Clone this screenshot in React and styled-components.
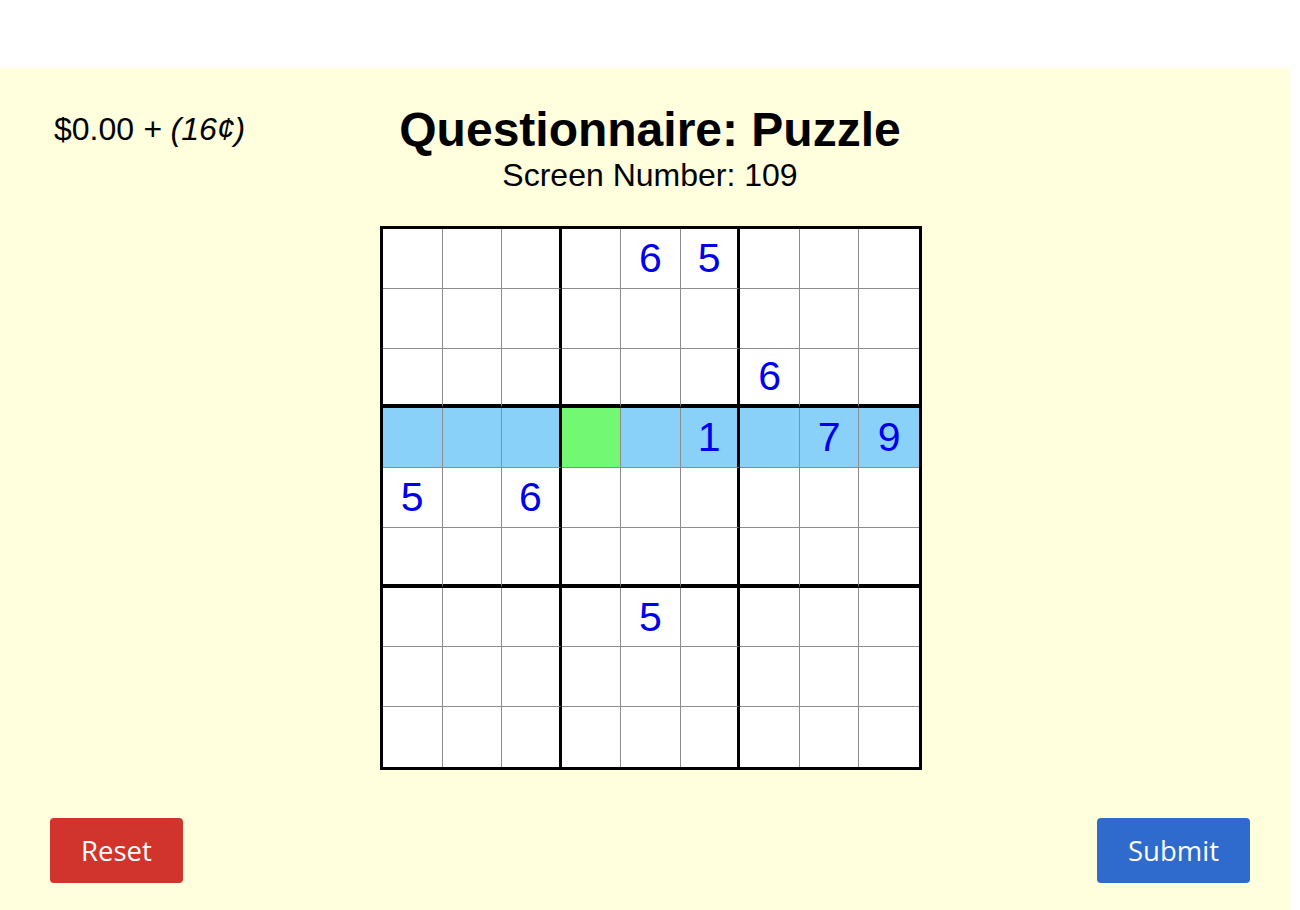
import React from 'react';
import styled, { createGlobalStyle } from 'styled-components';

const GlobalStyle = createGlobalStyle`
  html, body {
    margin: 0;
    padding: 0;
    background: #ffffff;
  }
`;

const Page = styled.div`
  width: 1290px;
  height: 842px;
  margin-top: 68px;
  background-color: #ffffdd;
  font-family: "Liberation Sans", Arial, sans-serif;
  color: #000;
  display: flex;
  flex-direction: column;
`;

const Header = styled.div`
  display: grid;
  grid-template-columns: 1fr auto 1fr;
  padding-top: 36px;
  padding-left: 10px;
`;

const Money = styled.div`
  font-size: 32px;
  margin-left: -10px;
  padding-left: 54px;
  padding-top: 9px;
  line-height: 1;
  white-space: nowrap;

  em {
    font-style: italic;
  }
`;

const TitleBlock = styled.div`
  display: flex;
  flex-direction: column;
  align-items: center;
`;

const Title = styled.h1`
  margin: 0;
  font-size: 48px;
  font-weight: bold;
  line-height: 52px;
`;

const ScreenNumber = styled.div`
  font-size: 32px;
  line-height: 36px;
  margin-top: 1px;
`;

const BoardWrap = styled.div`
  display: flex;
  justify-content: center;
  padding-left: 12px;
  margin-top: 33px;
`;

const Board = styled.div`
  width: 536px;
  height: 538px;
  border: 3px solid #000;
  display: grid;
  grid-template-columns: repeat(9, 1fr);
  grid-template-rows: repeat(9, 1fr);
  background: #fff;
`;

const Cell = styled.div`
  box-sizing: border-box;
  display: flex;
  align-items: center;
  justify-content: center;
  font-size: 41px;
  color: #0000ee;
  background-color: ${p => p.$bg};
  border-right: ${p => (p.$col === 8 ? 'none' : p.$col % 3 === 2 ? '3.5px solid #000' : '1.5px solid #8c8c8c')};
  border-bottom: ${p => (p.$row === 8 ? 'none' : p.$row % 3 === 2 ? '4px solid #000' : '1.5px solid #8c8c8c')};
`;

const Footer = styled.div`
  margin-top: auto;
  display: flex;
  justify-content: space-between;
  padding: 0 40px 27px 50px;
`;

const ActionButton = styled.button`
  height: 65px;
  padding: 0 31px;
  border: none;
  border-radius: 4px;
  background-color: ${p => (p.$kind === 'danger' ? '#d1342c' : '#2f6bcd')};
  color: #fff;
  font-family: "Open Sans", "Liberation Sans", sans-serif;
  font-size: 27.5px;
  cursor: pointer;
`;

const givens = {
  '0-4': 6, '0-5': 5,
  '2-6': 6,
  '3-5': 1, '3-7': 7, '3-8': 9,
  '4-0': 5, '4-2': 6,
  '6-4': 5,
};

function cellBg(r, c) {
  if (r === 3 && c === 3) return '#72f872';
  if (r === 3) return '#89d1f9';
  return '#ffffff';
}

export default function App() {
  const cells = [];
  for (let r = 0; r < 9; r++) {
    for (let c = 0; c < 9; c++) {
      cells.push(
        <Cell key={`${r}-${c}`} $row={r} $col={c} $bg={cellBg(r, c)}>
          {givens[`${r}-${c}`] || ''}
        </Cell>
      );
    }
  }

  return (
    <>
      <GlobalStyle />
      <Page>
        <Header>
          <Money>
            $0.00 <em>+ (16¢)</em>
          </Money>
          <TitleBlock>
            <Title>Questionnaire: Puzzle</Title>
            <ScreenNumber>Screen Number: 109</ScreenNumber>
          </TitleBlock>
          <div />
        </Header>
        <BoardWrap>
          <Board>{cells}</Board>
        </BoardWrap>
        <Footer>
          <ActionButton $kind="danger">Reset</ActionButton>
          <ActionButton $kind="primary">Submit</ActionButton>
        </Footer>
      </Page>
    </>
  );
}
